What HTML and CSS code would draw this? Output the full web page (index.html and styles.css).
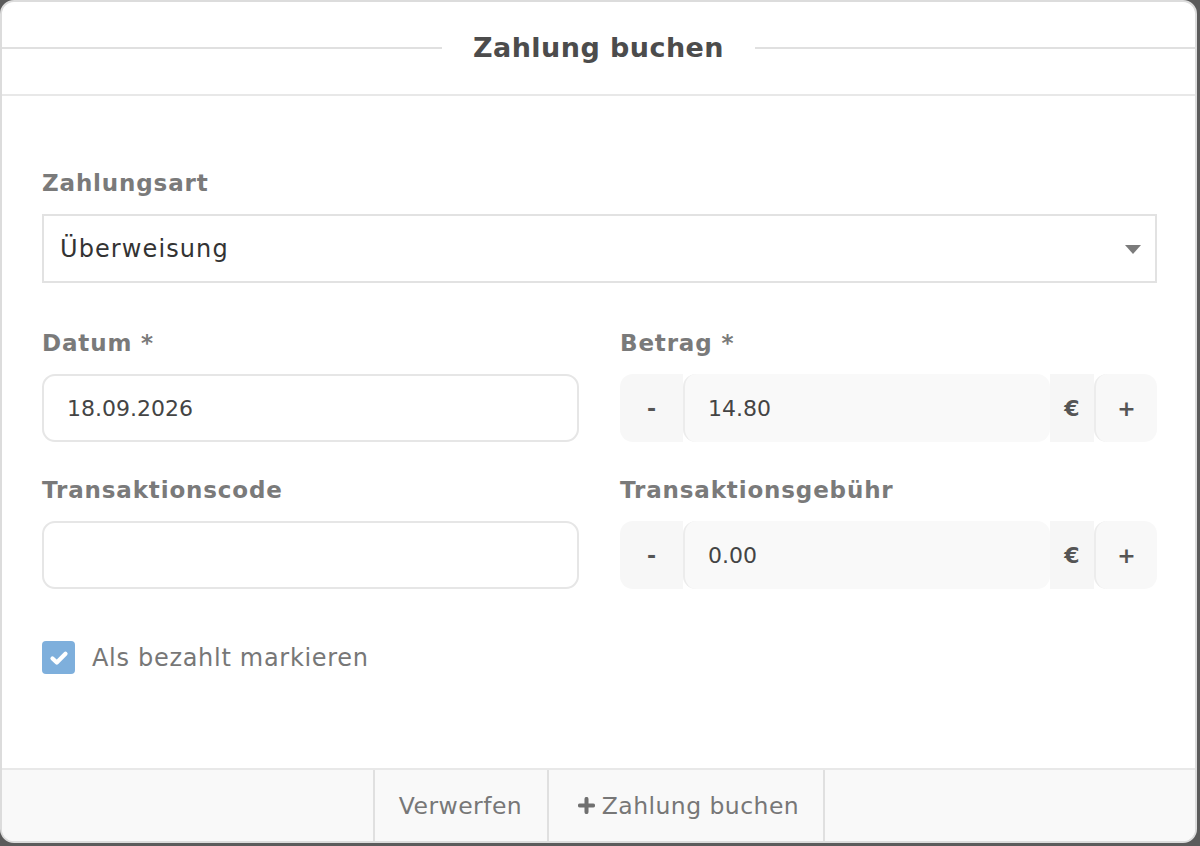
FILE: index.html
```html
<!DOCTYPE html>
<html lang="de">
<head>
<meta charset="utf-8">
<title>Zahlung buchen</title>
<link rel="stylesheet" href="styles.css">
</head>
<body>
<div class="modal">
  <div class="modal-header">
    <span class="hline"></span>
    <h1 class="title">Zahlung buchen</h1>
    <span class="hline"></span>
  </div>
  <div class="modal-body">
    <div class="field">
      <label class="label">Zahlungsart</label>
      <div class="select">
        <span class="select-value">Überweisung</span>
        <svg class="caret" width="16" height="10" viewBox="0 0 16 10"><path d="M0 0H16L8 9Z" fill="#7b7b7b"/></svg>
      </div>
    </div>
    <div class="row">
      <div class="col">
        <label class="label">Datum *</label>
        <div class="input">18.09.2026</div>
      </div>
      <div class="col">
        <label class="label">Betrag *</label>
        <div class="stepper">
          <div class="step minus">-</div>
          <div class="step-input">14.80</div>
          <div class="currency">€</div>
          <div class="step plus">+</div>
        </div>
      </div>
    </div>
    <div class="row row-second">
      <div class="col">
        <label class="label">Transaktionscode</label>
        <div class="input"></div>
      </div>
      <div class="col">
        <label class="label">Transaktionsgebühr</label>
        <div class="stepper">
          <div class="step minus">-</div>
          <div class="step-input">0.00</div>
          <div class="currency">€</div>
          <div class="step plus">+</div>
        </div>
      </div>
    </div>
    <div class="check-row">
      <span class="checkbox">
        <svg width="20" height="16" viewBox="0 0 20 16"><path d="M3.5 8.5L7.8 12.5L16.5 3.8" fill="none" stroke="#fff" stroke-width="4.2" stroke-linecap="round" stroke-linejoin="round"/></svg>
      </span>
      <span class="check-label">Als bezahlt markieren</span>
    </div>
  </div>
  <div class="modal-footer">
    <div class="btn btn-discard">Verwerfen</div>
    <div class="btn btn-submit"><svg class="plus-icon" width="17" height="17" viewBox="0 0 16 16"><path d="M8 1.8V14.2M1.8 8H14.2" stroke="#707070" stroke-width="3.8" stroke-linecap="round"/></svg>Zahlung buchen</div>
  </div>
</div>
</body>
</html>
```
FILE: styles.css
```css
* { box-sizing: border-box; }
html, body { margin: 0; padding: 0; }
body {
  width: 1200px;
  height: 846px;
  background: #5b5b5b;
  font-family: "DejaVu Sans", sans-serif;
  overflow: hidden;
}
.modal {
  width: 1197px;
  height: 843px;
  background: #fff;
  border: 2px solid #dcdcdc;
  border-radius: 14px;
  display: flex;
  flex-direction: column;
  overflow: hidden;
}
.modal-header {
  height: 94px;
  flex: none;
  border-bottom: 2px solid #e8e8e8;
  display: flex;
  align-items: center;
}
.hline {
  flex: 1;
  height: 2px;
  background: #e0e0e0;
}
.title {
  margin: 0;
  padding: 0 31px;
  font-size: 27px;
  font-weight: 700;
  color: #4c4c4c;
  line-height: 32px;
  letter-spacing: 0.45px;
}
.modal-body {
  flex: 1;
  padding: 72px 38px 0 40px;
}
.label {
  display: block;
  font-size: 23px;
  font-weight: 700;
  color: #7a7a7a;
  line-height: 30px;
  letter-spacing: 0.85px;
}
.select {
  margin-top: 16px;
  height: 69px;
  border: 2px solid #e2e2e2;
  display: flex;
  align-items: center;
  justify-content: space-between;
  padding: 0 14px 0 16px;
  font-size: 24px;
  color: #333;
}
.select-value { letter-spacing: 1.1px; }
.caret { margin-top: 2px; }
.row {
  display: grid;
  grid-template-columns: 537px 537px;
  column-gap: 41px;
  margin-top: 45px;
}
.row-second { margin-top: 33px; }
.row .label { margin-bottom: 16px; }
.input {
  height: 68px;
  border: 2px solid #e6e6e6;
  border-radius: 13px;
  display: flex;
  align-items: center;
  padding-left: 23px;
  font-size: 22px;
  color: #444;
}
.stepper {
  height: 68px;
  display: flex;
}
.step {
  width: 63px;
  flex: none;
  display: flex;
  align-items: center;
  justify-content: center;
  font-size: 22px;
  font-weight: 700;
  color: #555;
  background: #f7f7f7;
}
.minus { border-radius: 13px 0 0 13px; }
.plus {
  border-radius: 13px;
  border-left: 2px solid #ececec;
  background: #f8f8f8;
}
.step-input {
  flex: 1;
  background: #f9f9f9;
  border-radius: 13px;
  border-left: 2px solid #ececec;
  display: flex;
  align-items: center;
  padding-left: 23px;
  font-size: 22px;
  color: #444;
}
.currency {
  width: 44px;
  flex: none;
  background: #f6f6f6;
  display: flex;
  align-items: center;
  justify-content: center;
  font-size: 22px;
  font-weight: 700;
  color: #555;
}
.check-row {
  margin-top: 52px;
  display: flex;
  align-items: center;
  gap: 17px;
}
.checkbox {
  width: 33px;
  height: 33px;
  border-radius: 4px;
  background: #7eafdc;
  display: flex;
  align-items: center;
  justify-content: center;
}
.check-label {
  font-size: 24px;
  color: #777;
  letter-spacing: 0.7px;
}
.modal-footer {
  height: 73px;
  flex: none;
  background: #f9f9f9;
  border-top: 2px solid #e8e8e8;
  display: flex;
  justify-content: center;
}
.btn {
  display: flex;
  align-items: center;
  justify-content: center;
  gap: 4px;
  font-size: 23.5px;
  color: #777;
  border-left: 2px solid #e0e0e0;
  letter-spacing: 0.45px;
}
.btn-discard { width: 174px; }
.btn-submit { width: 278px; border-right: 2px solid #e0e0e0; gap: 7px; padding-left: 6px; }
.plus-icon { margin-top: -1px; }
```
